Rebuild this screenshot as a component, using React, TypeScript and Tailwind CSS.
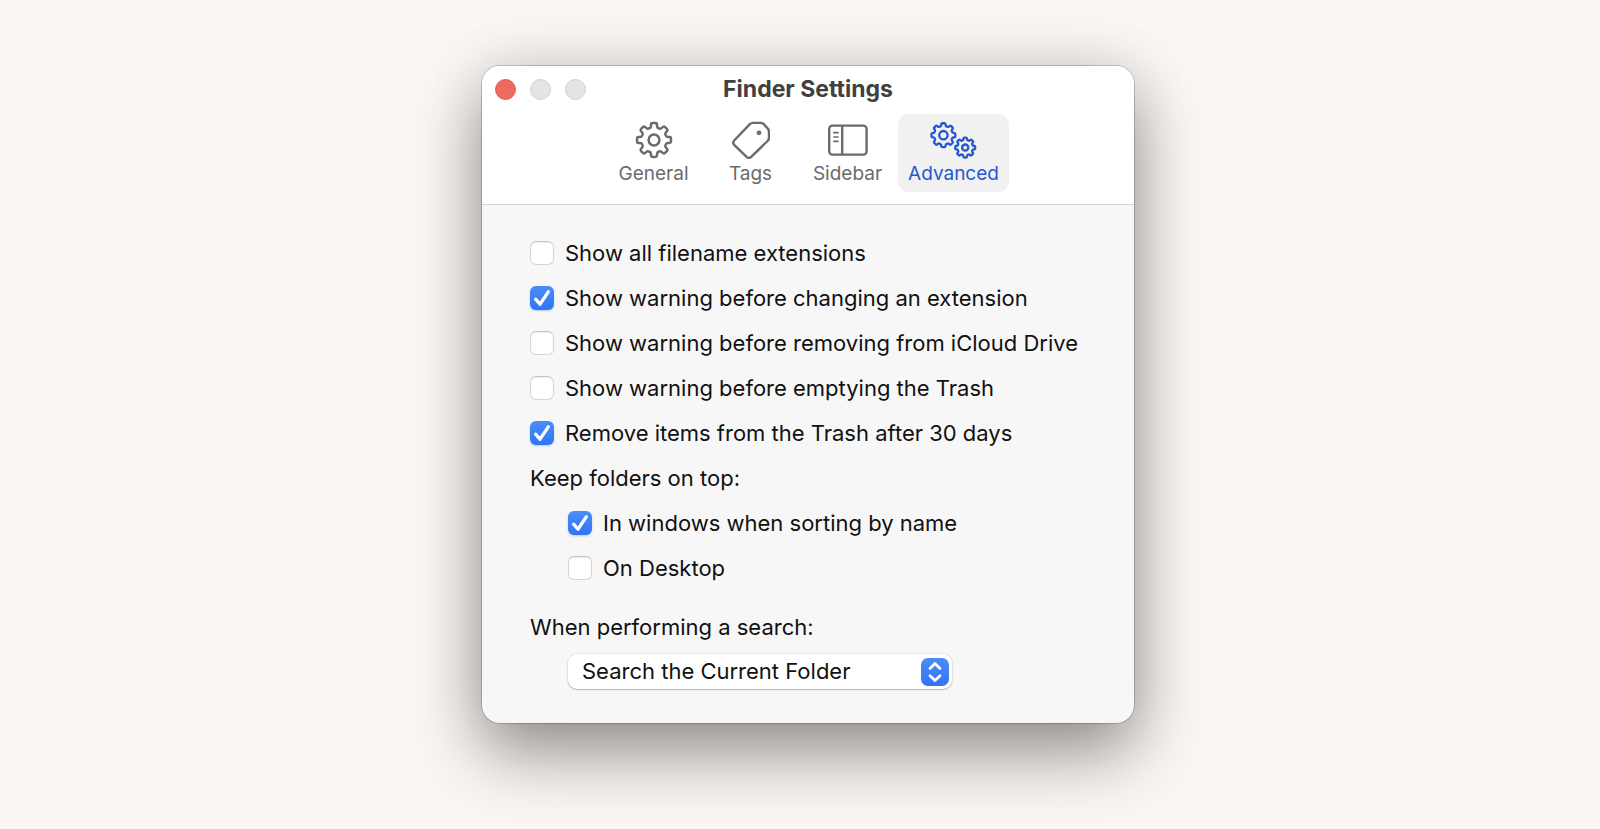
import { useState } from "react";
import type { ReactNode } from "react";

type Point = [number, number];

function gearPath(cx: number, cy: number, outer: number, root: number, teeth: number): string {
  const step = (Math.PI * 2) / teeth;
  const points: Point[] = [];
  for (let i = 0; i < teeth; i++) {
    const mid = i * step - Math.PI / 2;
    const corners: [number, number][] = [
      [root, -0.32],
      [outer, -0.21],
      [outer, 0.21],
      [root, 0.32],
    ];
    for (const [r, k] of corners) {
      const a = mid + k * step;
      points.push([cx + r * Math.cos(a), cy + r * Math.sin(a)]);
    }
  }
  const mix = (a: Point, b: Point, t: number): Point => [a[0] + (b[0] - a[0]) * t, a[1] + (b[1] - a[1]) * t];
  const fmt = (p: Point) => `${p[0].toFixed(2)} ${p[1].toFixed(2)}`;
  let d = "";
  points.forEach((p, i) => {
    const prev = points[(i + points.length - 1) % points.length];
    const next = points[(i + 1) % points.length];
    d += `${i === 0 ? "M" : "L"}${fmt(mix(p, prev, 0.28))}Q${fmt(p)} ${fmt(mix(p, next, 0.28))}`;
  });
  return d + "Z";
}

function GearIcon() {
  return (
    <svg width="38" height="38" viewBox="0 0 38 38" fill="none" stroke="currentColor" strokeWidth="2.5" strokeLinejoin="round" aria-hidden="true">
      <path d={gearPath(19, 19, 17.2, 12.8, 8)} />
      <circle cx="19" cy="19" r="5.4" />
    </svg>
  );
}

function TagIcon() {
  return (
    <svg width="38" height="38" viewBox="0 0 38 38" fill="none" stroke="currentColor" strokeWidth="2.4" strokeLinejoin="round" aria-hidden="true">
      <path d="M21.2 1.9H28.6Q30.4 1.9 31.7 3.2L35.6 7.3Q37 8.7 37 10.6V16.6Q37 18.6 35.6 20L19.2 35.9Q16.9 38 14.6 35.9L2.2 23.8Q0.2 21.7 2.2 19.5L17.6 3.4Q19.1 1.9 21.2 1.9Z" />
      <circle cx="27" cy="11.8" r="2.4" fill="currentColor" stroke="none" />
    </svg>
  );
}

function SidebarIcon() {
  return (
    <svg width="40" height="38" viewBox="0 0 40 38" fill="none" stroke="currentColor" strokeWidth="2.4" aria-hidden="true">
      <rect x="1.2" y="4.6" width="37.4" height="29" rx="3.4" />
      <path d="M14.2 4.6V33.6" />
      <path d="M5.2 11.6H10.6M5.2 16H10.6M5.2 20.4H10.6" strokeWidth="1.7" />
    </svg>
  );
}

function GearsIcon() {
  return (
    <svg width="48" height="38" viewBox="0 0 48 38" fill="none" stroke="currentColor" strokeWidth="2.3" strokeLinejoin="round" aria-hidden="true">
      <path d={gearPath(13.4, 14.2, 12.1, 9.4, 8)} />
      <circle cx="13.4" cy="14.2" r="4.2" />
      <path d={gearPath(35.2, 26.6, 10.1, 7.8, 8)} />
      <circle cx="35.2" cy="26.6" r="3.1" />
    </svg>
  );
}

const tabs: { name: string; icon: ReactNode; width: string }[] = [
  { name: "General", icon: <GearIcon />, width: "min-w-[93px]" },
  { name: "Tags", icon: <TagIcon />, width: "min-w-[93px]" },
  { name: "Sidebar", icon: <SidebarIcon />, width: "min-w-[93px]" },
  { name: "Advanced", icon: <GearsIcon />, width: "min-w-[111px]" },
];

function CheckRow({ label, defaultChecked = false }: { label: string; defaultChecked?: boolean }) {
  return (
    <label className="flex h-[45px] items-center gap-[11px]">
      <span className="grid shrink-0">
        <input
          type="checkbox"
          defaultChecked={defaultChecked}
          className="peer col-start-1 row-start-1 size-6 appearance-none rounded-[6px] border border-[#d6d6d6] border-t-[#c6c6c6] bg-white shadow-[inset_0_1px_1px_rgba(0,0,0,0.08)] checked:border-0 checked:bg-linear-to-b checked:from-[#4b8df8] checked:to-[#3273f6] checked:shadow-[0_1px_2px_rgba(50,115,246,0.35)]"
        />
        <svg className="pointer-events-none invisible col-start-1 row-start-1 size-6 peer-checked:visible" viewBox="0 0 24 24" fill="none" stroke="#fff" strokeWidth="3.3" strokeLinecap="round" strokeLinejoin="round" aria-hidden="true">
          <path d="M5.6 13.2L10 18.2L18.3 5.8" />
        </svg>
      </span>
      <span>{label}</span>
    </label>
  );
}

export default function App() {
  const [active, setActive] = useState("Advanced");
  return (
    <main className="flex min-h-screen items-start justify-center bg-[#faf6f3] pt-[66px] pb-12 pl-4 font-['Inter','Liberation_Sans',sans-serif]">
      <section className="w-full max-w-[652px] overflow-hidden rounded-[18px] bg-[#f7f7f7] shadow-[0_0_0_1px_rgba(0,0,0,0.18),0_30px_68px_rgba(0,0,0,0.4),0_0_60px_rgba(0,0,0,0.1)]">
        <header className="border-b border-[#d4d4d4] bg-white pb-3">
          <div className="mb-[2px] grid h-[46px] grid-cols-[1fr_auto_1fr] items-center px-[13px]">
            <div className="flex gap-[14px]">
              <button type="button" aria-label="Close" className="size-[21px] rounded-full border border-[#dc5e54] bg-[#ec6a5e]" />
              <button type="button" aria-label="Minimize" className="size-[21px] rounded-full border border-[#d0d0d0] bg-[#e4e4e4]" />
              <button type="button" aria-label="Zoom" className="size-[21px] rounded-full border border-[#d0d0d0] bg-[#e4e4e4]" />
            </div>
            <h1 className="text-[23px] leading-7 font-bold text-[#404040]">Finder Settings</h1>
          </div>
          <nav className="flex justify-center gap-1">
            {tabs.map((tab) => (
              <button
                key={tab.name}
                type="button"
                aria-pressed={active === tab.name}
                onClick={() => setActive(tab.name)}
                className={`flex h-[78px] flex-col items-center rounded-[11px] pt-[7px] text-[19px] leading-[30px] ${tab.width} ${
                  active === tab.name ? "bg-[#f1f1f1] text-[#2657d0]" : "text-[#6b6b6b]"
                }`}
              >
                {tab.icon}
                <span>{tab.name}</span>
              </button>
            ))}
          </nav>
        </header>
        <form className="px-12 pt-[25px] pb-[34px] text-[22px] leading-7 text-[#111]">
          <CheckRow label="Show all filename extensions" />
          <CheckRow label="Show warning before changing an extension" defaultChecked />
          <CheckRow label="Show warning before removing from iCloud Drive" />
          <CheckRow label="Show warning before emptying the Trash" />
          <CheckRow label="Remove items from the Trash after 30 days" defaultChecked />
          <fieldset>
            <legend className="flex h-[45px] items-center">Keep folders on top:</legend>
            <div className="pl-[38px]">
              <CheckRow label="In windows when sorting by name" defaultChecked />
              <CheckRow label="On Desktop" />
            </div>
          </fieldset>
          <label htmlFor="search-scope" className="mt-[23px] block">
            When performing a search:
          </label>
          <div className="relative mt-[13px] ml-[38px] max-w-[384px]">
            <select
              id="search-scope"
              defaultValue="current"
              className="block h-[35px] w-full appearance-none rounded-[9px] bg-white pr-10 pb-[2px] pl-[14px] shadow-[0_0_1px_1px_rgba(0,0,0,0.07),0_1px_1px_rgba(0,0,0,0.22)]"
            >
              <option value="mac">Search This Mac</option>
              <option value="current">Search the Current Folder</option>
              <option value="previous">Use the Previous Search Scope</option>
            </select>
            <span className="pointer-events-none absolute top-1 right-[3px] size-7 rounded-[7px] bg-linear-to-b from-[#4b8df8] to-[#3273f6]">
              <svg viewBox="0 0 28 28" fill="none" stroke="#fff" strokeWidth="2.8" strokeLinecap="round" strokeLinejoin="round" aria-hidden="true">
                <path d="M9 10.4L14 5.6L19 10.4M9 17.8L14 22.6L19 17.8" />
              </svg>
            </span>
          </div>
        </form>
      </section>
    </main>
  );
}
